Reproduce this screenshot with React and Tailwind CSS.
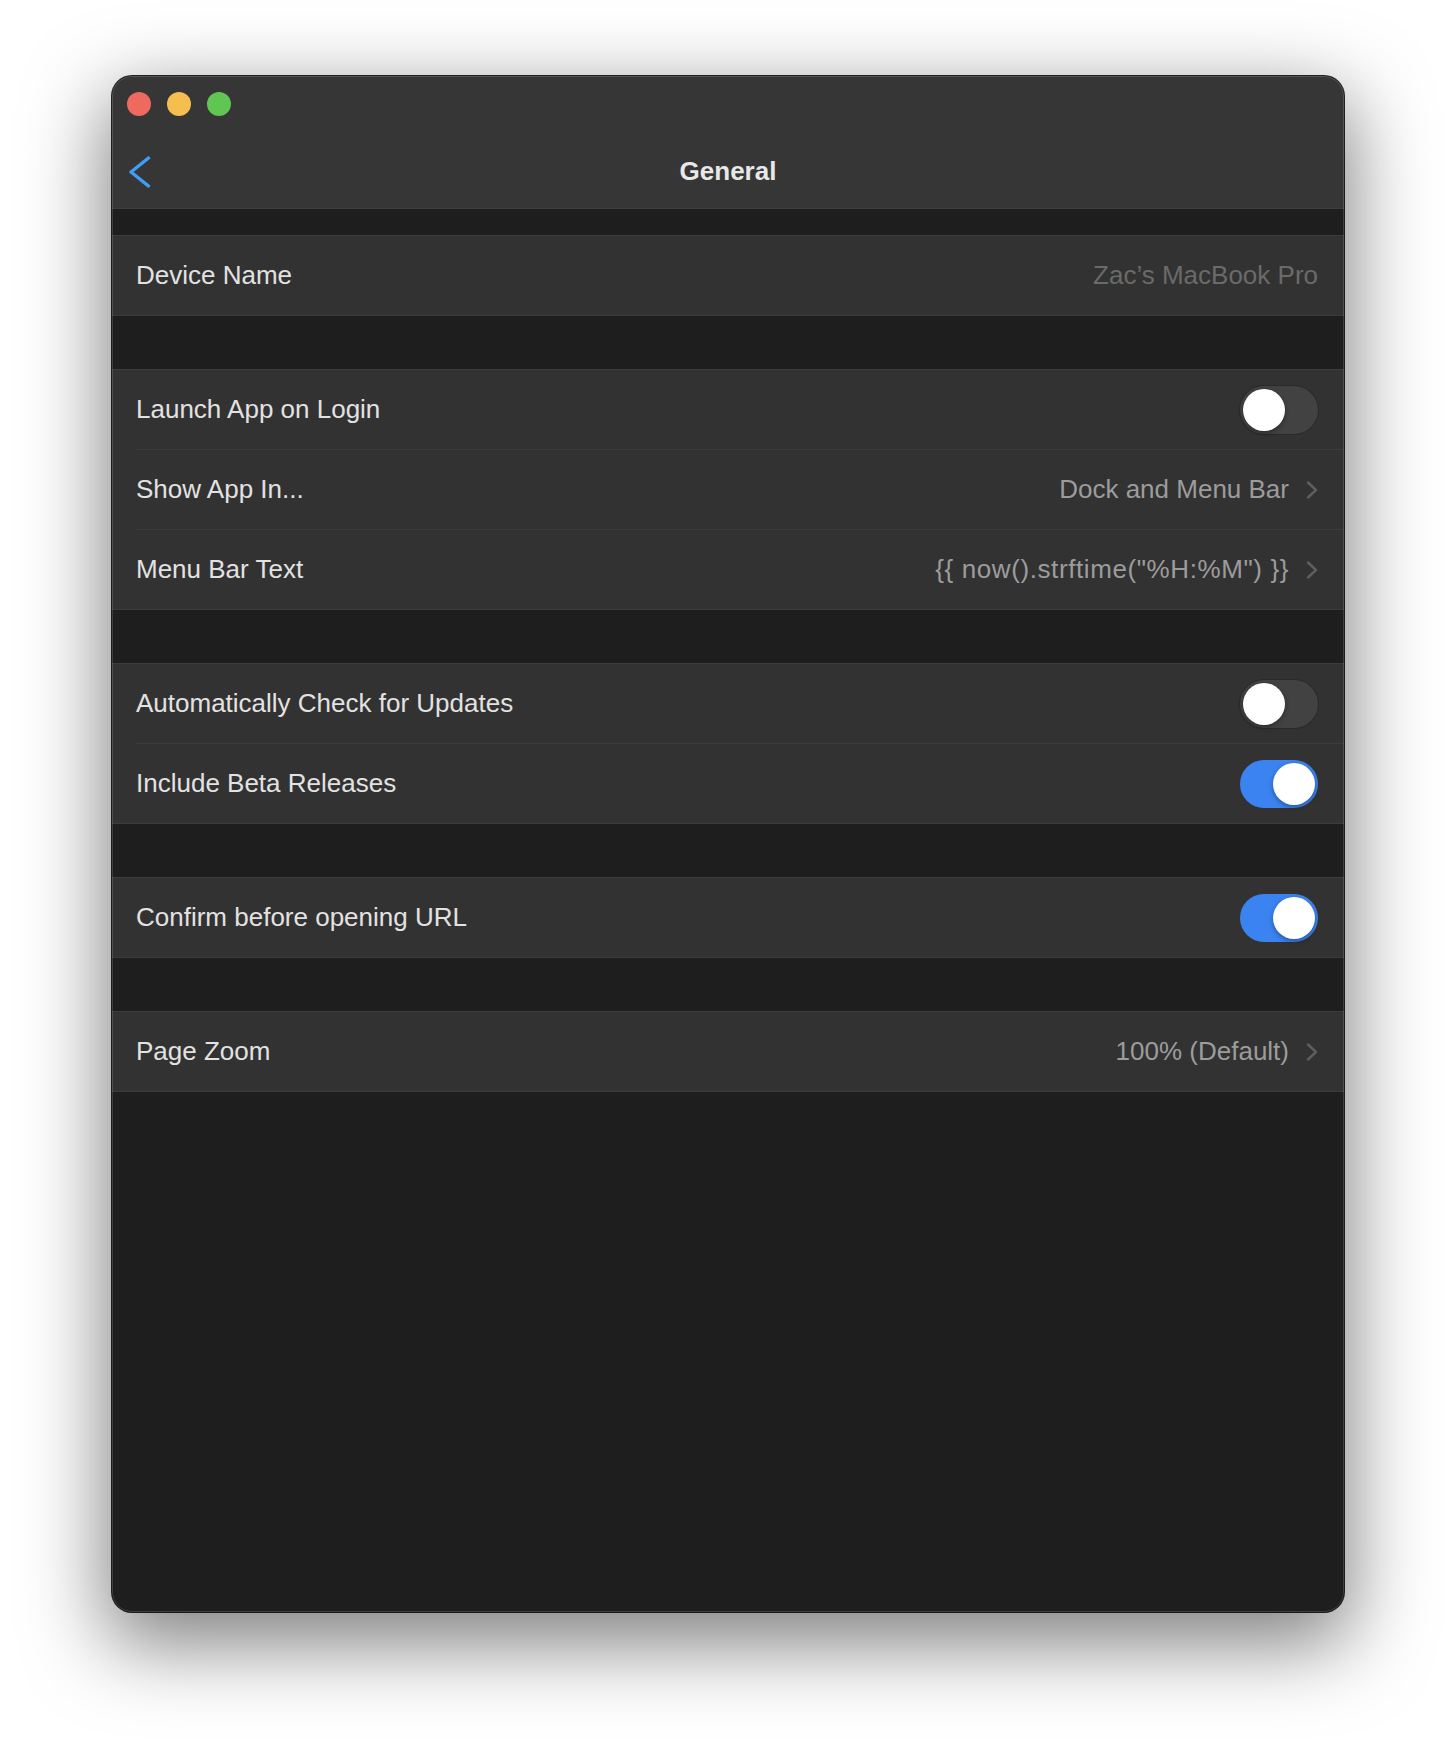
import React from "react";

const Chevron = () => (
  <svg width="12" height="18" viewBox="0 0 12 18" className="ml-[17px] shrink-0">
    <polyline
      points="2,1.5 10,9 2,16.5"
      fill="none"
      stroke="#5e5e5e"
      strokeWidth="2.4"
      strokeLinecap="round"
      strokeLinejoin="round"
    />
  </svg>
);

const Toggle = ({ on }) => (
  <div
    className={
      on
        ? "w-[78px] h-[48px] rounded-full bg-[#3a83f1] p-[3px] flex justify-end"
        : "w-[78px] h-[48px] rounded-full bg-[#424242] p-[3px] flex justify-start shadow-[0_0_0_1px_#2a2a2a]"
    }
  >
    <div className="w-[42px] h-[42px] rounded-full bg-white shadow-[0_2px_5px_rgba(0,0,0,0.35)]" />
  </div>
);

const Row = ({ label, first, children }) => (
  <div className="pl-[24px]">
    <div
      className={
        first
          ? "h-[79px] flex items-center justify-between pr-[26px]"
          : "h-[80px] flex items-center justify-between pr-[26px] border-t border-[#3c3c3c]"
      }
    >
      <span className="text-[26px] text-[#e2e2e2]">{label}</span>
      <div className="flex items-center">{children}</div>
    </div>
  </div>
);

const Section = ({ children }) => (
  <div className="bg-[#323232] border-y border-[#3c3c3c]">{children}</div>
);

const Value = ({ text, wide }) => (
  <>
    <span
      className={
        wide
          ? "text-[26px] text-[#9c9c9c] tracking-[0.6px]"
          : "text-[26px] text-[#9c9c9c]"
      }
    >
      {text}
    </span>
    <Chevron />
  </>
);

export default function App() {
  return (
    <div
      className="min-h-[1760px] bg-white pt-[76px] pl-[112px]"
      style={{ fontFamily: '"Liberation Sans", Arial, sans-serif' }}
    >
      <div className="relative w-[1232px] h-[1536px] rounded-[20px] overflow-hidden bg-[#1e1e1e] flex flex-col shadow-[0_0_0_1px_rgba(0,0,0,0.85),0_26px_80px_6px_rgba(0,0,0,0.5)]">
        {/* title bar */}
        <div className="h-[133px] bg-[#363636] border-b border-[#3f3f3f] flex flex-col">
          <div className="h-[58px] flex items-start gap-[16px] pt-[16px] pl-[15px]">
            <div className="w-[24px] h-[24px] rounded-full bg-[#ee6a5f]" />
            <div className="w-[24px] h-[24px] rounded-full bg-[#f5be4f]" />
            <div className="w-[24px] h-[24px] rounded-full bg-[#61c554]" />
          </div>
          <div className="flex-1 grid grid-cols-[1fr_auto_1fr] items-center">
            <div className="pl-[17px] pt-[2px] flex items-center">
              <svg width="22" height="32" viewBox="0 0 22 32">
                <polyline
                  points="19.5,2 2,16 19.5,30"
                  fill="none"
                  stroke="#3d9ef4"
                  strokeWidth="3.4"
                  strokeLinecap="round"
                  strokeLinejoin="round"
                />
              </svg>
            </div>
            <span className="text-[26px] font-bold text-[#e8e8e8]">General</span>
            <div />
          </div>
        </div>

        <div className="h-[26px]" />
        <Section>
          <Row label="Device Name" first>
            <span className="text-[26px] text-[#6a6a6a]">Zac’s MacBook Pro</span>
          </Row>
        </Section>

        <div className="h-[53px]" />
        <Section>
          <Row label="Launch App on Login" first>
            <Toggle on={false} />
          </Row>
          <Row label="Show App In...">
            <Value text="Dock and Menu Bar" />
          </Row>
          <Row label="Menu Bar Text">
            <Value text={'{{ now().strftime("%H:%M") }}'} wide />
          </Row>
        </Section>

        <div className="h-[53px]" />
        <Section>
          <Row label="Automatically Check for Updates" first>
            <Toggle on={false} />
          </Row>
          <Row label="Include Beta Releases">
            <Toggle on />
          </Row>
        </Section>

        <div className="h-[53px]" />
        <Section>
          <Row label="Confirm before opening URL" first>
            <Toggle on />
          </Row>
        </Section>

        <div className="h-[53px]" />
        <Section>
          <Row label="Page Zoom" first>
            <Value text="100% (Default)" />
          </Row>
        </Section>

        <div className="absolute inset-0 rounded-[20px] border border-white/15 pointer-events-none" />
      </div>
    </div>
  );
}
